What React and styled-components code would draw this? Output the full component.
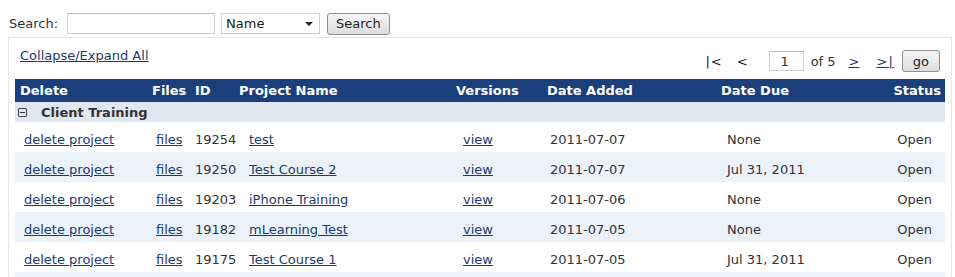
import React from "react";
import styled, { createGlobalStyle } from "styled-components";

const Global = createGlobalStyle`
  html, body { margin: 0; padding: 0; background: #fff; }
  body { font-family: "DejaVu Sans", Verdana, sans-serif; font-size: 13px; color: #333; }
  * { box-sizing: border-box; }
`;

const Page = styled.div`
  padding: 12px 4px 0 8px;
`;

const SearchBar = styled.form`
  display: flex;
  align-items: center;
  height: 23px;
  gap: 6px;
  padding-left: 1px;
`;

const Label = styled.span`
  color: #333;
  margin-right: 3px;
`;

const TextInput = styled.input`
  width: ${(p) => p.$w}px;
  height: ${(p) => p.$h || 21}px;
  margin-left: ${(p) => p.$ml || 0}px;
  padding: 0 ${(p) => p.$pr || 4}px 0 4px;
  border: 1px solid #d0d0d0;
  border-top-color: #b8b8b8;
  font: inherit;
  text-align: ${(p) => p.$align || "left"};
  color: #333;
  background: #fff;
`;

const Select = styled.div`
  width: 99px;
  height: 21px;
  border: 1px solid #d0d0d0;
  display: flex;
  align-items: center;
  justify-content: space-between;
  padding: 0 6px 0 4px;
  color: #222;
`;

const Caret = styled.span`
  width: 0;
  height: 0;
  border-left: 4px solid transparent;
  border-right: 4px solid transparent;
  border-top: 4px solid #222;
`;

const Button = styled.button`
  height: ${(p) => p.$h || 22}px;
  padding: 0 ${(p) => p.$px || 8}px;
  font: inherit;
  color: #222;
  border: 1px solid #8f8f8f;
  border-radius: 3px;
  background: linear-gradient(#f6f6f6, #dcdcdc);
  margin-left: ${(p) => p.$ml || 0}px;
`;

const Panel = styled.div`
  margin-top: 2px;
  border: 1px solid #e6e6e6;
  border-bottom: none;
  width: 944px;
  padding: 8px 6px 0 6px;
`;

const TopRow = styled.div`
  display: flex;
  justify-content: space-between;
  align-items: flex-start;
  height: 33px;
`;

const Link = styled.a`
  color: #1b3a6b;
  text-decoration: underline;
  cursor: pointer;
`;

const CollapseLink = styled(Link)`
  margin-left: 5px;
  margin-top: 2px;
`;

const Pager = styled.div`
  display: flex;
  align-items: center;
  margin-top: 4px;
  margin-right: 5px;
`;

const PagerText = styled.span`
  color: ${(p) => (p.$dark ? "#222" : "#333")};
  margin-left: ${(p) => p.$ml || 0}px;
  letter-spacing: ${(p) => p.$ls || 0}px;
`;

const PagerLink = styled(Link)`
  margin-left: ${(p) => p.$ml || 0}px;
  letter-spacing: ${(p) => p.$ls || 0}px;
`;

const Table = styled.table`
  border-collapse: collapse;
  table-layout: fixed;
  width: 930px;
`;

const HeadRow = styled.tr`
  background: #1b3f7b;
  height: 23px;
`;

const Th = styled.th`
  color: #fff;
  font-weight: bold;
  text-align: ${(p) => p.$align || "left"};
  padding: 0 ${(p) => p.$pr || 0}px 0 ${(p) => (p.$pl == null ? 5 : p.$pl)}px;
  white-space: nowrap;
`;

const GroupRow = styled.tr`
  background: #dfe7f1;
  height: 20px;
`;

const GroupCell = styled.td`
  padding: 0 0 0 4px;
  font-weight: bold;
  color: #333;
`;

const GroupInner = styled.div`
  display: flex;
  align-items: center;
`;

const Toggle = styled.span`
  width: 9px;
  height: 9px;
  border: 1px solid #444;
  border-radius: 1px;
  display: inline-flex;
  align-items: center;
  justify-content: center;
  margin-right: 14px;
  margin-left: -1px;
  &::after {
    content: "";
    width: 5px;
    height: 1px;
    background: #333;
  }
`;

const Row = styled.tr`
  height: 30px;
  background: ${(p) => (p.$alt ? "#ebf2fa" : "#fff")};
`;

const Td = styled.td`
  padding: 4px ${(p) => p.$pr || 0}px 0 ${(p) => p.$pl || 0}px;
  text-align: ${(p) => p.$align || "left"};
  white-space: nowrap;
  color: #333;
`;

const rows = [
  { id: 19254, name: "test", added: "2011-07-07", due: "None" },
  { id: 19250, name: "Test Course 2", added: "2011-07-07", due: "Jul 31, 2011" },
  { id: 19203, name: "iPhone Training", added: "2011-07-06", due: "None" },
  { id: 19182, name: "mLearning Test", added: "2011-07-05", due: "None" },
  { id: 19175, name: "Test Course 1", added: "2011-07-05", due: "Jul 31, 2011" },
];

export default function App() {
  return (
    <>
      <Global />
      <Page>
        <SearchBar onSubmit={(e) => e.preventDefault()}>
          <Label>Search:</Label>
          <TextInput $w={148} />
          <Select>
            <span>Name</span>
            <Caret />
          </Select>
          <Button type="button" $ml={1}>Search</Button>
        </SearchBar>
        <Panel>
          <TopRow>
            <CollapseLink>Collapse/Expand All</CollapseLink>
            <Pager>
              <PagerText $dark $ls={1}>|&lt;</PagerText>
              <PagerText $dark $ml={14}>&lt;</PagerText>
              <TextInput $w={35} $h={20} $ml={21} $pr={14} $align="right" defaultValue="1" />
              <PagerText $ml={7}>of 5</PagerText>
              <PagerLink $ml={13}>&gt;</PagerLink>
              <PagerLink $ml={17} $ls={1}>&gt;|</PagerLink>
              <Button type="button" $h={22} $px={10} $ml={8}>go</Button>
            </Pager>
          </TopRow>
          <Table>
            <colgroup>
              <col style={{ width: 132 }} />
              <col style={{ width: 43 }} />
              <col style={{ width: 44 }} />
              <col style={{ width: 217 }} />
              <col style={{ width: 91 }} />
              <col style={{ width: 174 }} />
              <col style={{ width: 164 }} />
              <col style={{ width: 65 }} />
            </colgroup>
            <thead>
              <HeadRow>
                <Th>Delete</Th>
                <Th>Files</Th>
                <Th>ID</Th>
                <Th>Project Name</Th>
                <Th>Versions</Th>
                <Th>Date Added</Th>
                <Th>Date Due</Th>
                <Th $align="right" $pr={4} $pl={0}>Status</Th>
              </HeadRow>
            </thead>
            <tbody>
              <GroupRow>
                <GroupCell colSpan={8}>
                  <GroupInner>
                    <Toggle />
                    Client Training
                  </GroupInner>
                </GroupCell>
              </GroupRow>
              {rows.map((r, i) => (
                <Row key={r.id} $alt={i % 2 === 1}>
                  <Td $pl={9}><Link>delete project</Link></Td>
                  <Td $pl={9}><Link>files</Link></Td>
                  <Td $pl={5}>{r.id}</Td>
                  <Td $pl={15}><Link>{r.name}</Link></Td>
                  <Td $pl={12}><Link>view</Link></Td>
                  <Td $pl={8}>{r.added}</Td>
                  <Td $pl={11}>{r.due}</Td>
                  <Td $align="right" $pr={13}>Open</Td>
                </Row>
              ))}
              <Row $alt>
                <Td colSpan={8} />
              </Row>
            </tbody>
          </Table>
        </Panel>
      </Page>
    </>
  );
}
